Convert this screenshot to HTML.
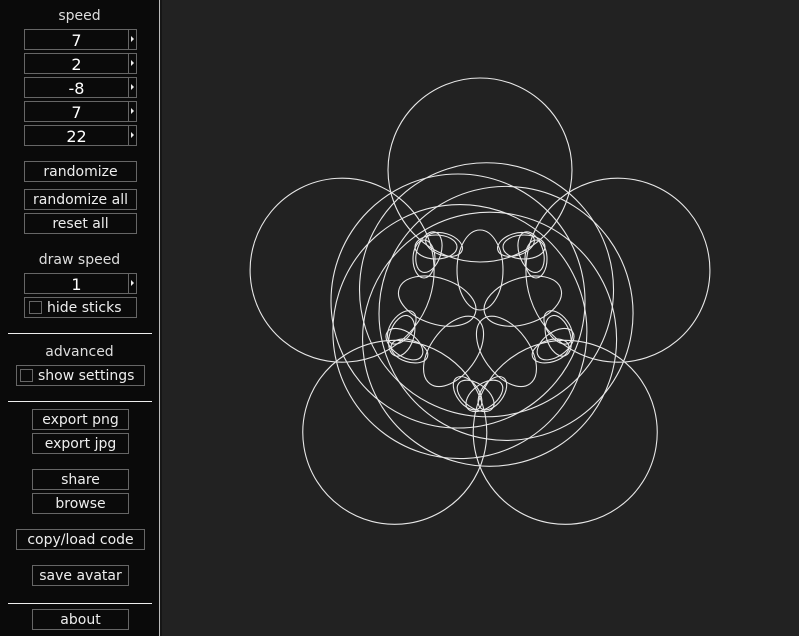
<!DOCTYPE html>
<html><head><meta charset="utf-8"><style>
html,body{margin:0;padding:0;width:799px;height:636px;overflow:hidden;background:#222;font-family:"DejaVu Sans","Liberation Sans",sans-serif;}
#side{position:absolute;left:0;top:0;width:159px;height:636px;background:#0a0a0a;}
#edge{position:absolute;left:159px;top:0;width:1px;height:636px;background:#bbb;}
#edge2{position:absolute;left:160px;top:0;width:2px;height:636px;background:#161616;}
.t{position:absolute;left:0;width:159px;text-align:center;color:#ddd;font-size:14px;line-height:22px;}
.b{position:absolute;box-sizing:border-box;border:1px solid #666;color:#eee;font-size:14px;line-height:20px;text-align:center;}
.n{position:absolute;left:24px;width:105px;height:21px;box-sizing:border-box;border:1px solid #666;color:#fff;font-size:16px;line-height:21px;text-align:center;}
.a{position:absolute;left:128px;width:9px;height:21px;box-sizing:border-box;border:1px solid #666;}
.a:after{content:"";position:absolute;left:2px;top:6px;border-left:3px solid #eee;border-top:3px solid transparent;border-bottom:3px solid transparent;}
.hr{position:absolute;left:8px;width:144px;height:1px;background:#eee;}
.cb{display:inline-block;width:11px;height:11px;border:1px solid #666;vertical-align:-2px;margin-right:5px;}
svg{position:absolute;left:0;top:0;}
</style></head><body>
<div id="side"></div><div id="edge"></div><div id="edge2"></div>
<div class="t" style="top:5px">speed</div>
<div class="n" style="top:29px">7</div><div class="a" style="top:29px"></div>
<div class="n" style="top:53px">2</div><div class="a" style="top:53px"></div>
<div class="n" style="top:77px">-8</div><div class="a" style="top:77px"></div>
<div class="n" style="top:101px">7</div><div class="a" style="top:101px"></div>
<div class="n" style="top:125px">22</div><div class="a" style="top:125px"></div>
<div class="b" style="left:24px;width:113px;top:161px;height:21px">randomize</div>
<div class="b" style="left:24px;width:113px;top:189px;height:21px">randomize all</div>
<div class="b" style="left:24px;width:113px;top:213px;height:21px">reset all</div>
<div class="t" style="top:249px">draw speed</div>
<div class="n" style="top:273px">1</div><div class="a" style="top:273px"></div>
<div class="b" style="left:24px;width:113px;top:297px;height:21px;text-align:left;padding-left:4px"><span class="cb"></span>hide sticks</div>
<div class="hr" style="top:333px"></div>
<div class="t" style="top:341px">advanced</div>
<div class="b" style="left:16px;width:129px;top:365px;height:21px;text-align:left;padding-left:3px"><span class="cb"></span>show settings</div>
<div class="hr" style="top:401px"></div>
<div class="b" style="left:32px;width:97px;top:409px;height:21px">export png</div>
<div class="b" style="left:32px;width:97px;top:433px;height:21px">export jpg</div>
<div class="b" style="left:32px;width:97px;top:469px;height:21px">share</div>
<div class="b" style="left:32px;width:97px;top:493px;height:21px">browse</div>
<div class="b" style="left:16px;width:129px;top:529px;height:21px">copy/load code</div>
<div class="b" style="left:32px;width:97px;top:565px;height:21px">save avatar</div>
<div class="hr" style="top:603px"></div>
<div class="b" style="left:32px;width:97px;top:609px;height:21px">about</div>
<svg width="799" height="636" viewBox="0 0 799 636">
<defs>
<g id="u" fill="none" stroke="#e8e8e8" stroke-width="1.1">
<circle cx="0" cy="-145" r="92"/>
<circle cx="-22" cy="-14" r="127"/>
<ellipse cx="0" cy="-45" rx="23" ry="40"/>
<ellipse cx="-44" cy="-68" rx="21" ry="12"/>
<ellipse cx="-56" cy="-56" rx="11" ry="19"/>
<ellipse cx="44" cy="-68" rx="21" ry="12"/>
<ellipse cx="56" cy="-56" rx="11" ry="19"/>
</g>
</defs>
<g transform="translate(480,315)">
<use href="#u"/>
<use href="#u" transform="rotate(72)"/>
<use href="#u" transform="rotate(144)"/>
<use href="#u" transform="rotate(216)"/>
<use href="#u" transform="rotate(288)"/>
</g>
</svg>
</body></html>
